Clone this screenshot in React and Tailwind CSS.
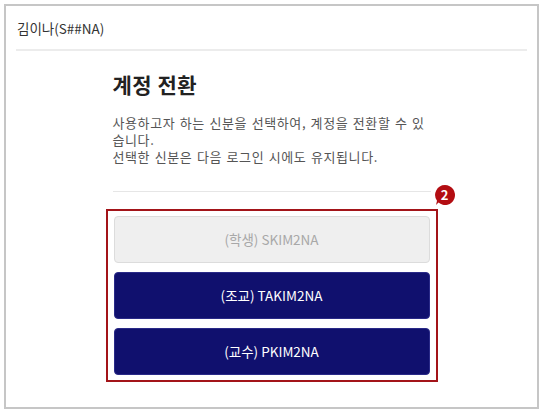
import React from 'react';

const font = { fontFamily: '"Noto Sans CJK KR", "Noto Sans", sans-serif' };

const Badge = () => (
  <div className="absolute -top-[27px] -right-[20px] w-[22px] h-[22px]">
    <svg width="22" height="22" viewBox="0 0 22 22" className="absolute inset-0">
      <path d="M11 1a10 10 0 1 1-6.5 17.6L2 21l1-4.2A10 10 0 0 1 11 1z" fill="#b30d12" />
    </svg>
    <span className="absolute inset-0 flex items-center justify-center text-white text-[13px] font-bold leading-none pb-[1px]">2</span>
  </div>
);

export default function App() {
  return (
    <div className="w-[547px] h-[414px] bg-white p-[4px]" style={font}>
      <div className="w-[535px] h-[405px] border-2 border-[#c6c6c6] px-[10px]">
        <div className="h-[45px] flex items-center text-[13.5px] text-[#333] pl-[1px] pt-[2px] border-b-2 border-[#ececec]">
          김이나(S##NA)
        </div>

        <div className="mx-auto w-[326px] pt-[18px]">
          <div className="px-[4px]">
            <h1 className="text-[21px] font-bold text-[#222] leading-[30px] tracking-[0.5px]">계정 전환</h1>
            <p className="mt-[15px] text-[13px] text-[#555] leading-[17px] tracking-[0.6px] [word-spacing:1px]">
              사용하고자 하는 신분을 선택하여, 계정을 전환할 수 있<br />
              습니다.<br />
              선택한 신분은 다음 로그인 시에도 유지됩니다.
            </p>
            <div className="mt-[26px] border-t border-[#e6e6e6]" />
          </div>

          <div className="relative mt-[17px] -mx-[3px] border-2 border-[#a31419] px-[6px] py-[5px] flex flex-col gap-[9px]">
            <Badge />
            <button className="h-[47px] rounded-[4px] bg-[#efefef] border border-[#dcdcdc] text-[#a8a8a8] text-[13.5px]">
              (학생) SKIM2NA
            </button>
            <button className="h-[47px] rounded-[4px] bg-[#10106e] border border-[#2a2a88] text-white text-[13.5px]">
              (조교) TAKIM2NA
            </button>
            <button className="h-[47px] rounded-[4px] bg-[#10106e] border border-[#2a2a88] text-white text-[13.5px]">
              (교수) PKIM2NA
            </button>
          </div>
        </div>
      </div>
    </div>
  );
}
